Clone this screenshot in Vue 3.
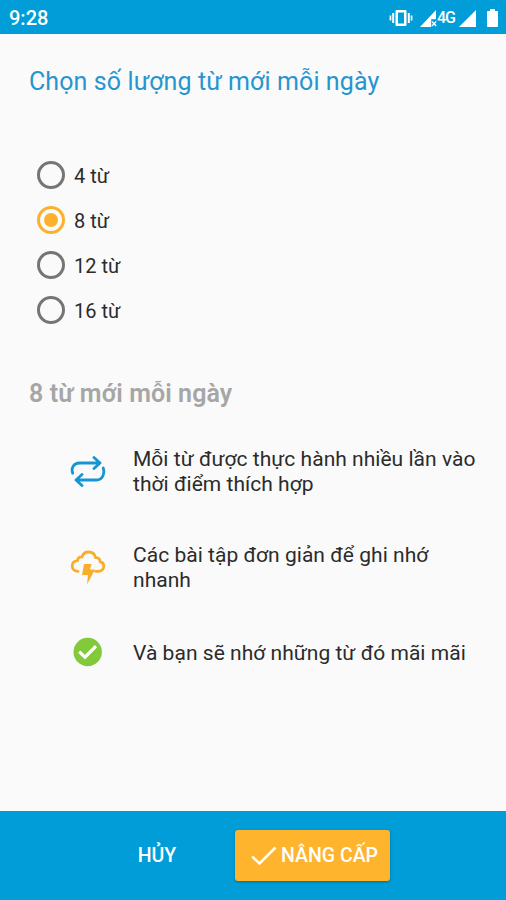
<template>
    <div class="screen">
        <header class="status-bar">
            <span class="clock">9:28</span>
            <div class="status-icons">
                <svg class="icon-vibrate" viewBox="0 0 24 18" fill="#fff">
                    <path fill-rule="evenodd" d="M7.500 1h9a1 1 0 0 1 1 1v14a1 1 0 0 1-1 1h-9a1 1 0 0 1-1-1V2a1 1 0 0 1 1-1zM9 3.500v11h6v-11z" />
                    <path d="M3.200 4h2v10h-2zM.6 6.500h1.700v5H.6zM18.800 4h2v10h-2zM21.700 6.500h1.700v5h-1.700z" />
                </svg>
                <svg class="icon-signal-off" viewBox="0 0 17 17" fill="#fff">
                    <path d="M16 0v9.300h-4.800V17H0z" />
                    <path d="M12.300 11l1.700 1.700 1.700-1.700 1 1-1.700 1.800 1.700 1.700-1 1-1.700-1.700-1.700 1.700-.8-1 1.600-1.700-1.600-1.800z" />
                </svg>
                <span class="network">4G</span>
                <svg class="icon-signal" viewBox="0 0 17 17" fill="#fff">
                    <path d="M17 0v17H0z" />
                </svg>
                <svg class="icon-battery" viewBox="0 0 11 18" fill="#fff">
                    <path d="M3 0h5v2h2.200a.8.8 0 0 1 .8.8v14.400a.8.8 0 0 1-.8.8H.8a.8.8 0 0 1-.8-.8V2.800a.8.8 0 0 1 .8-.8H3z" />
                </svg>
            </div>
        </header>

        <main class="content">
            <h1 class="title">Chọn số lượng từ mới mỗi ngày</h1>

            <div class="options">
                <label v-for="count in counts" :key="count" class="option">
                    <input v-model="selected" type="radio" name="count" :value="count" />
                    <span class="radio"></span>
                    <span class="option-text">{{ count }} từ</span>
                </label>
            </div>

            <h2 class="subtitle">{{ selected }} từ mới mỗi ngày</h2>

            <ul class="features">
                <li class="feature">
                    <svg class="feature-icon" viewBox="0 0 36 36" fill="none" stroke="#1596d4" stroke-width="2.8" stroke-linecap="round" stroke-linejoin="round">
                        <path d="M2.700 20.200C0.800 14.500 4 10 9.500 10H30M24 4.500L30 10L24 15.500" />
                        <path d="M33.200 15C35.200 21.200 32 27 26.500 27H6.500M12 21.500L6 27L12 32.500" />
                    </svg>
                    <p>Mỗi từ được thực hành nhiều lần vào thời điểm thích hợp</p>
                </li>
                <li class="feature">
                    <svg class="feature-icon" viewBox="0 0 36 36">
                        <path d="M8 22.300C4.500 22.300 2.200 20 2.200 17C2.200 14 4.500 12 7.500 11.700C7.700 9 9.700 7.700 12 8C13 4.700 15.500 3 18.500 3C22.300 3 25 5.400 25.600 8.700C28.500 8.500 30.200 10.300 30 12.600C32.500 13.200 33.800 15 33.800 17.200C33.800 20.200 31.300 22.300 28 22.300H25.500" fill="none" stroke="#f9ae2b" stroke-width="2.800" stroke-linecap="round" stroke-linejoin="round" />
                        <path d="M14 15H21.500L20 20.500H25L17 35.500L18 26H12z" fill="#f9ae2b" />
                    </svg>
                    <p>Các bài tập đơn giản để ghi nhớ nhanh</p>
                </li>
                <li class="feature">
                    <svg class="feature-icon" viewBox="0 0 36 36">
                        <circle cx="17.700" cy="18" r="14.200" fill="#82ca3b" />
                        <path d="M9.200 17.700L15 23.200L26 12.200" fill="none" stroke="#fff" stroke-width="3.200" />
                    </svg>
                    <p>Và bạn sẽ nhớ những từ đó mãi mãi</p>
                </li>
            </ul>
        </main>

        <footer class="actions">
            <button class="btn-cancel" type="button">HỦY</button>
            <button class="btn-upgrade" type="button">
                <svg class="icon-check" viewBox="0 0 26 20" fill="none" stroke="#fff" stroke-width="2.500">
                    <path d="M1.200 10.500L8.500 17.500L24.500 1.500" />
                </svg>
                <span>NÂNG CẤP</span>
            </button>
        </footer>
    </div>
</template>

<script setup>
import { ref } from 'vue';

const counts = [4, 8, 12, 16];
const selected = ref(8);
</script>

<style>
body {
    margin: 0;
    background-color: #fafafa;
}
</style>

<style scoped>
.screen {
    display: flex;
    flex-direction: column;
    height: 900px;
    box-sizing: border-box;
    background-color: #fafafa;
    color: #2b2b2b;
    font-family: Roboto, "Noto Sans", sans-serif;
}

.status-bar {
    display: flex;
    align-items: center;
    justify-content: space-between;
    height: 34px;
    padding: 0 8px 0 9px;
    background-color: #009dd9;
    color: #fff;
}

.clock {
    padding-top: 2px;
    font-size: 20px;
    font-weight: 500;
    line-height: 22px;
}

.status-icons {
    display: flex;
    align-items: center;
    padding-top: 2px;
}

.icon-vibrate {
    width: 24px;
    height: 18px;
    margin-right: 7px;
}

.icon-signal-off,
.icon-signal {
    width: 17px;
    height: 17px;
}

.network {
    width: 18px;
    margin-right: 4px;
    font-size: 16px;
    font-weight: 500;
    line-height: 18px;
    letter-spacing: -1px;
}

.icon-battery {
    width: 11px;
    height: 18px;
    margin-left: 11px;
}

.content {
    flex: 1;
    padding: 32px 28px 0 29px;
}

.title {
    margin: 0;
    font-size: 25px;
    font-weight: 400;
    line-height: 32px;
    letter-spacing: 0.1px;
    color: #2795cf;
    white-space: nowrap;
}

.options {
    display: flex;
    flex-direction: column;
    margin-top: 55px;
    padding-left: 8px;
}

.option {
    display: flex;
    align-items: center;
    height: 45px;
}

.option input {
    display: none;
}

.radio {
    display: flex;
    align-items: center;
    justify-content: center;
    box-sizing: border-box;
    width: 28px;
    height: 28px;
    margin-top: -1px;
    border: 3px solid #757575;
    border-radius: 50%;
}

.option input:checked + .radio {
    border-color: #fcb02c;
}

.option input:checked + .radio::after {
    content: "";
    width: 14px;
    height: 14px;
    border-radius: 50%;
    background-color: #fcb02c;
}

.option-text {
    margin-left: 9px;
    font-size: 20px;
    line-height: 24px;
}

.subtitle {
    margin: 45px 0 0;
    font-size: 25px;
    font-weight: 600;
    line-height: 32px;
    letter-spacing: 0.1px;
    color: #a6a6a6;
    white-space: nowrap;
}

.features {
    display: flex;
    flex-direction: column;
    margin: 37px 0 0;
    padding: 0 0 0 41px;
    list-style: none;
}

.feature {
    display: flex;
    align-items: center;
    margin-bottom: 46px;
}

.feature-icon {
    flex: none;
    width: 36px;
    height: 36px;
    margin: -5px 0 -3px;
}

.feature p {
    width: 348px;
    margin: 0 -4px 0 27px;
    font-size: 21px;
    line-height: 25px;
    letter-spacing: 0.03px;
}

.actions {
    display: flex;
    align-items: center;
    height: 89px;
    box-sizing: border-box;
    background-color: #009dd9;
}

.actions button {
    padding: 0;
    border: none;
    background: none;
    color: #fff;
    font-family: inherit;
    font-size: 19.5px;
    font-weight: 500;
    line-height: 24px;
}

.btn-cancel {
    width: 78px;
    margin-left: 118px;
}

.actions .btn-upgrade {
    display: flex;
    align-items: center;
    width: 155px;
    height: 51px;
    margin-left: 39px;
    padding-left: 16px;
    border-radius: 3px;
    background-color: #ffb42d;
    box-shadow: 0 1px 3px rgba(0, 0, 0, 0.3);
    white-space: nowrap;
}

.icon-check {
    width: 26px;
    height: 20px;
    margin-right: 4px;
}
</style>
